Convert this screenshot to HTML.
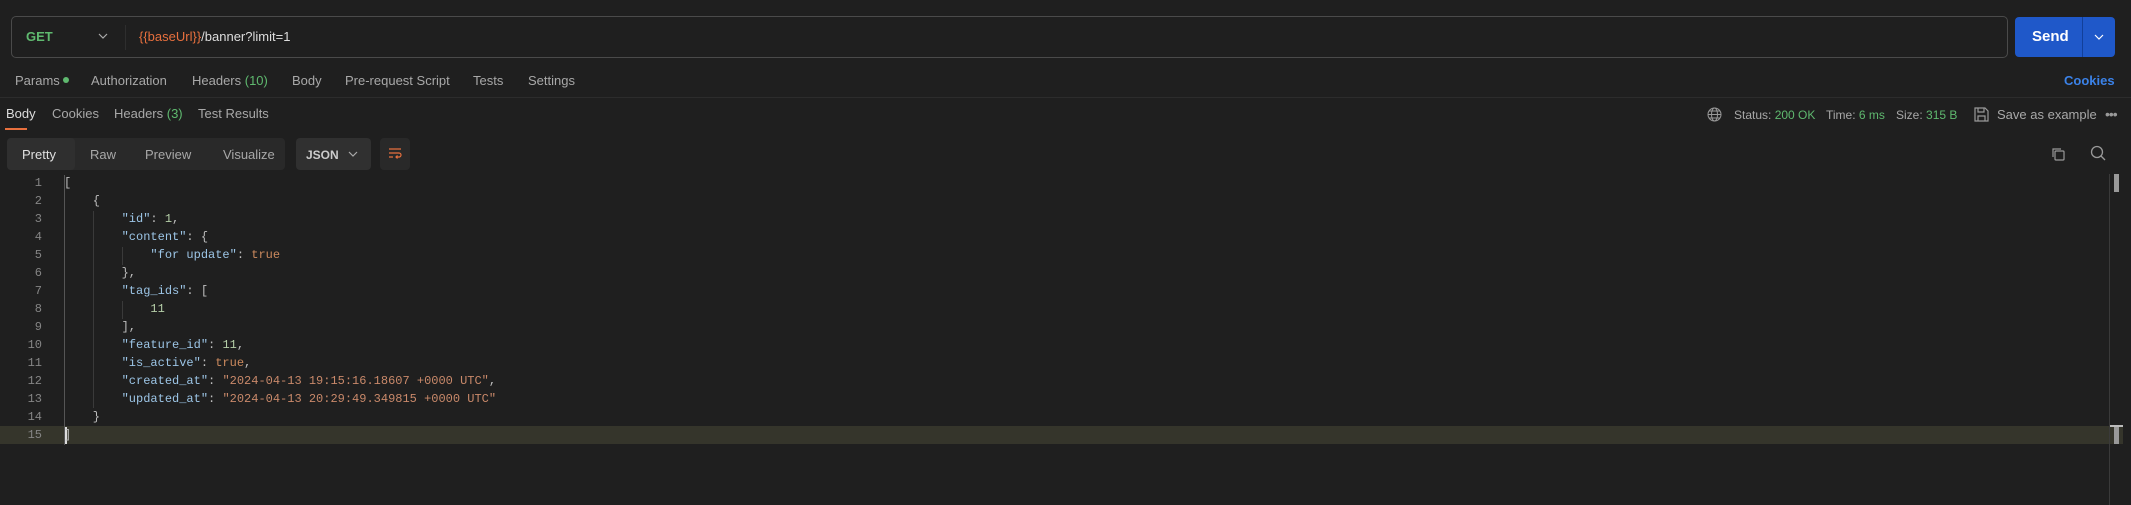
<!DOCTYPE html>
<html><head><meta charset="utf-8"><style>
*{margin:0;padding:0;box-sizing:border-box}
body{width:2131px;height:505px;background:#1f1f1f;font-family:"Liberation Sans",sans-serif;color:#a8a8a8;position:relative;overflow:hidden;font-size:13px}
.a{position:absolute;white-space:nowrap}
.url{left:11px;top:16px;width:1997px;height:42px;border:1px solid #4a4a4a;border-radius:5px}
.send{left:2015px;top:17px;width:100px;height:40px;background:#1f58c9;border-radius:4px}
.g{color:#5fb96f}
.tab{top:73px;font-size:13px;color:#a8a8a8}
.code{font-family:"Liberation Mono",monospace;font-size:12px;line-height:18px}
.k{color:#9cc5e6}.s{color:#c9896a}.n{color:#b5cea8}.b{color:#cc8a5e}.p{color:#bdbdbd}
.ln{color:#858585;width:42px;text-align:right}
</style></head><body>
<div class="a url"></div>
<div class="a" style="left:26px;top:29px;color:#5fb96f;font-weight:bold;font-size:13px">GET</div>
<svg class="a" style="left:98px;top:32px" width="10" height="8"><path d="M1 2l4 4 4-4" stroke="#aaa" fill="none" stroke-width="1.2"/></svg>
<div class="a" style="left:125px;top:25px;width:1px;height:25px;background:#2e2e2e"></div>
<div class="a" style="left:139px;top:29px;font-size:13px;color:#ddd"><span style="color:#e8703e">{{baseUrl}}</span>/banner?limit=1</div>
<div class="a send"></div>
<div class="a" style="left:2082px;top:17px;width:1px;height:40px;background:#12409a"></div>
<div class="a" style="left:2032px;top:28px;color:#fff;font-weight:bold;font-size:15px">Send</div>
<svg class="a" style="left:2094px;top:33px" width="10" height="8"><path d="M1 2l4 4 4-4" stroke="#fff" fill="none" stroke-width="1.2"/></svg>
<div class="a tab" style="left:15px">Params <span style="display:inline-block;width:6px;height:6px;border-radius:3px;background:#5fb96f;vertical-align:2px"></span></div>
<div class="a tab" style="left:91px">Authorization</div>
<div class="a tab" style="left:192px">Headers <span class="g">(10)</span></div>
<div class="a tab" style="left:292px">Body</div>
<div class="a tab" style="left:345px">Pre-request Script</div>
<div class="a tab" style="left:473px">Tests</div>
<div class="a tab" style="left:528px">Settings</div>
<div class="a" style="left:2064px;top:73px;color:#3b82e8;font-weight:bold">Cookies</div>
<div class="a" style="left:0;top:97px;width:2131px;height:1px;background:#2c2c2c"></div>
<div class="a" style="left:6px;top:106px;color:#dcdcdc">Body</div>
<div class="a" style="left:5px;top:128px;width:22px;height:2px;background:#e8703e"></div>
<div class="a" style="left:52px;top:106px">Cookies</div>
<div class="a" style="left:114px;top:106px">Headers <span class="g">(3)</span></div>
<div class="a" style="left:198px;top:106px">Test Results</div>
<svg class="a" style="left:1707px;top:107px" width="15" height="15" fill="none" stroke="#999" stroke-width="1"><circle cx="7.5" cy="7.5" r="6.5"/><ellipse cx="7.5" cy="7.5" rx="3" ry="6.5"/><path d="M1 7.5h13M2 4h11M2 11h11"/></svg>
<div class="a" style="left:1734px;top:108px;font-size:12px">Status: <span class="g">200 OK</span></div>
<div class="a" style="left:1826px;top:108px;font-size:12px">Time: <span class="g">6 ms</span></div>
<div class="a" style="left:1896px;top:108px;font-size:12px">Size: <span class="g">315 B</span></div>
<svg class="a" style="left:1974px;top:107px" width="15" height="15" fill="none" stroke="#999" stroke-width="1.2"><path d="M1 1h10l3 3v10H1z"/><path d="M4 1v4h6V1M4 14V9h7v5"/></svg>
<div class="a" style="left:1997px;top:107px">Save as example</div>
<div class="a" style="left:2105px;top:106px;color:#999;font-size:14px;letter-spacing:-1px">•••</div>
<div class="a" style="left:7px;top:138px;width:278px;height:32px;background:#292929;border-radius:4px"></div>
<div class="a" style="left:7px;top:138px;width:68px;height:32px;background:#2f2f2f;border-radius:4px"></div>
<div class="a" style="left:22px;top:147px;color:#e0e0e0">Pretty</div>
<div class="a" style="left:90px;top:147px">Raw</div>
<div class="a" style="left:145px;top:147px">Preview</div>
<div class="a" style="left:223px;top:147px">Visualize</div>
<div class="a" style="left:296px;top:138px;width:75px;height:32px;background:#303030;border-radius:4px"></div>
<div class="a" style="left:306px;top:148px;font-size:12px;color:#ccc;font-weight:bold">JSON</div>
<svg class="a" style="left:348px;top:150px" width="10" height="8"><path d="M1 2l4 4 4-4" stroke="#aaa" fill="none" stroke-width="1.2"/></svg>
<div class="a" style="left:380px;top:138px;width:30px;height:32px;background:#292929;border-radius:4px"></div>
<svg class="a" style="left:388px;top:146px" width="14" height="14" fill="none" stroke="#e8703e" stroke-width="1.2"><path d="M1 3h12M1 7h10a2 2 0 010 4H8M9.5 9.5L8 11l1.5 1.5M1 11h4"/></svg>
<svg class="a" style="left:2050px;top:146px" width="16" height="16" fill="none" stroke="#999" stroke-width="1.2"><rect x="5" y="5" width="9" height="9" rx="1"/><path d="M3 11V3h8"/></svg>
<svg class="a" style="left:2090px;top:145px" width="16" height="16" fill="none" stroke="#999" stroke-width="1.3"><circle cx="7" cy="7" r="5.5"/><path d="M11 11l4 4"/></svg>
<div class="a" style="left:0;top:426px;width:2123px;height:18px;background:#35352b"></div>
<div class="a" style="left:2109px;top:174px;width:1px;height:331px;background:#3a3a3a"></div>
<div class="a" style="left:2114px;top:174px;width:5px;height:18px;background:#999"></div>
<div class="a" style="left:2114px;top:426px;width:5px;height:18px;background:#999"></div>
<div class="a" style="left:2110px;top:425px;width:13px;height:2px;background:#bbb"></div>
<div class="a" style="left:64px;top:175px;width:1px;height:270px;background:#555"></div>
<div class="a" style="left:93px;top:211px;width:1px;height:197px;background:#3a3a3a"></div>
<div class="a" style="left:122px;top:247px;width:1px;height:18px;background:#3a3a3a"></div>
<div class="a" style="left:122px;top:301px;width:1px;height:18px;background:#3a3a3a"></div>
<div class="a" style="left:65px;top:427px;width:2px;height:17px;background:#ddd"></div>
<div class="a code ln" style="left:0;top:174px">1<br>2<br>3<br>4<br>5<br>6<br>7<br>8<br>9<br>10<br>11<br>12<br>13<br>14<br>15</div>
<pre class="a code p" style="left:64px;top:174px;white-space:pre">[
    {
        <span class="k">"id"</span>: <span class="n">1</span>,
        <span class="k">"content"</span>: {
            <span class="k">"for update"</span>: <span class="b">true</span>
        },
        <span class="k">"tag_ids"</span>: [
            <span class="n">11</span>
        ],
        <span class="k">"feature_id"</span>: <span class="n">11</span>,
        <span class="k">"is_active"</span>: <span class="b">true</span>,
        <span class="k">"created_at"</span>: <span class="s">"2024-04-13 19:15:16.18607 +0000 UTC"</span>,
        <span class="k">"updated_at"</span>: <span class="s">"2024-04-13 20:29:49.349815 +0000 UTC"</span>
    }
]</pre>
</body></html>
